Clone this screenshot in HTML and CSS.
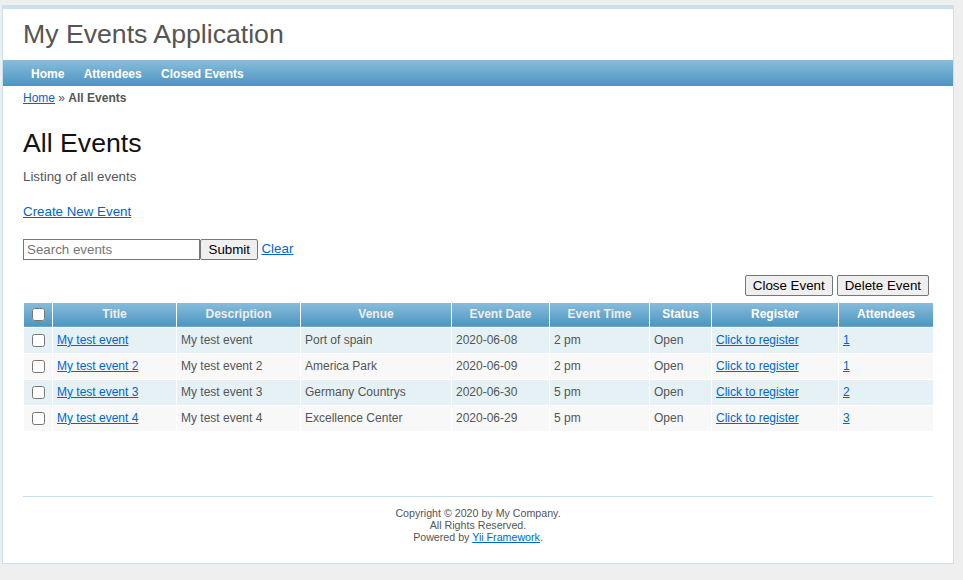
FILE: index.html
```html
<!DOCTYPE html>
<html lang="en">
<head>
<meta charset="utf-8">
<title>My Events Application - All Events</title>
<link rel="stylesheet" href="styles.css">
</head>
<body>
<div class="page">
  <div class="header">
    <div class="logo">My Events Application</div>
  </div>
  <div class="mainmenu">
    <ul>
      <li><a href="#">Home</a></li>
      <li><a href="#">Attendees</a></li>
      <li><a href="#">Closed Events</a></li>
    </ul>
  </div>
  <div class="breadcrumbs"><a href="#">Home</a> &raquo; <span>All Events</span></div>

  <div class="content">
    <h1>All Events</h1>
    <p>Listing of all events</p>
    <p><a href="#">Create New Event</a></p>

    <form class="search">
      <input type="text" class="search-input" placeholder="Search events">
      <button type="button" class="btn btn-submit">Submit</button>
      <a href="#" class="clear">Clear</a>
    </form>

    <div class="actions">
      <button type="button" class="btn">Close Event</button>
      <button type="button" class="btn">Delete Event</button>
    </div>

    <div class="grid-view">
      <table class="items">
        <colgroup>
          <col class="c-cb"><col class="c-title"><col class="c-desc"><col class="c-venue"><col class="c-date"><col class="c-time"><col class="c-status"><col class="c-reg"><col class="c-att">
        </colgroup>
        <thead>
          <tr>
            <th class="cb"><input type="checkbox"></th>
            <th><a href="#">Title</a></th>
            <th><a href="#">Description</a></th>
            <th><a href="#">Venue</a></th>
            <th><a href="#">Event Date</a></th>
            <th><a href="#">Event Time</a></th>
            <th>Status</th>
            <th>Register</th>
            <th>Attendees</th>
          </tr>
        </thead>
        <tbody>
          <tr class="odd">
            <td class="cb"><input type="checkbox"></td>
            <td><a href="#">My test event</a></td>
            <td>My test event</td>
            <td>Port of spain</td>
            <td>2020-06-08</td>
            <td>2 pm</td>
            <td>Open</td>
            <td><a href="#">Click to register</a></td>
            <td><a href="#">1</a></td>
          </tr>
          <tr class="even">
            <td class="cb"><input type="checkbox"></td>
            <td><a href="#">My test event 2</a></td>
            <td>My test event 2</td>
            <td>America Park</td>
            <td>2020-06-09</td>
            <td>2 pm</td>
            <td>Open</td>
            <td><a href="#">Click to register</a></td>
            <td><a href="#">1</a></td>
          </tr>
          <tr class="odd">
            <td class="cb"><input type="checkbox"></td>
            <td><a href="#">My test event 3</a></td>
            <td>My test event 3</td>
            <td>Germany Countrys</td>
            <td>2020-06-30</td>
            <td>5 pm</td>
            <td>Open</td>
            <td><a href="#">Click to register</a></td>
            <td><a href="#">2</a></td>
          </tr>
          <tr class="even">
            <td class="cb"><input type="checkbox"></td>
            <td><a href="#">My test event 4</a></td>
            <td>My test event 4</td>
            <td>Excellence Center</td>
            <td>2020-06-29</td>
            <td>5 pm</td>
            <td>Open</td>
            <td><a href="#">Click to register</a></td>
            <td><a href="#">3</a></td>
          </tr>
        </tbody>
      </table>
    </div>
  </div>

  <div class="footer">
    Copyright &copy; 2020 by My Company.<br>
    All Rights Reserved.<br>
    Powered by <a href="#">Yii Framework</a>.
  </div>
</div>
</body>
</html>
```

FILE: styles.css
```css
* { box-sizing: border-box; }

body {
  margin: 0;
  padding: 0;
  background: #efefef;
  color: #555;
  font: normal 13.333px/20px "Liberation Sans", Arial, Helvetica, sans-serif;
}

a { color: #0066cc; }

.page {
  width: 952px;
  margin: 5px 0 5px 2px;
  background: #fff;
  border: 1px solid #c9e0ed;
}

.header {
  border-top: 3px solid #c9e0ed;
}

.logo {
  padding: 10px 20px;
  font-size: 26.667px;
  line-height: 31px;
  color: #555;
}

.mainmenu {
  background: linear-gradient(to bottom, #88bddb 0%, #4c95c1 100%);
}

.mainmenu ul {
  margin: 0;
  padding: 7px 20px 4px 20px;
  list-style: none;
  font-size: 12px;
  line-height: 15px;
  height: 26px;
}

.mainmenu li { display: inline; }

.mainmenu a {
  color: #fff;
  font-size: 12px;
  font-weight: bold;
  text-decoration: none;
  padding: 5px 8px;
}

.breadcrumbs {
  padding: 5px 20px;
  font-size: 12px;
  line-height: 14px;
}

.breadcrumbs span { font-weight: bold; }

.content {
  padding: 20px 20px 20px 20px;
}

h1 {
  margin: 0 0 10px 0;
  font-size: 26.667px;
  line-height: 26.667px;
  font-weight: normal;
  color: #111;
}

p {
  margin: 0 0 15px 0;
}

.search {
  display: flex;
  align-items: center;
  margin: 17px 0 0 0;
  height: 21px;
}

.search-input {
  width: 177px;
  height: 21px;
  margin: 0;
  padding: 1px 3px;
  border: 1px solid #767676;
  border-radius: 0;
  font: 13.333px "Liberation Sans", Arial, sans-serif;
  color: #333;
}

.search-input::placeholder { color: #757575; }

.btn {
  height: 21px;
  margin: 0;
  padding: 0 7px;
  border: 1px solid #767676;
  border-radius: 2px;
  background: #efefef;
  color: #000;
  font: 13.333px "Liberation Sans", Arial, sans-serif;
}

.btn-submit { padding: 0 7.5px; }

.clear { margin-left: 3px; }

.actions {
  display: flex;
  justify-content: flex-end;
  gap: 4px;
  margin-top: 15px;
  padding-right: 4px;
}

.grid-view {
  margin-top: 6px;
  margin-bottom: 34px;
}

table.items {
  width: 100%;
  table-layout: fixed;
  border-collapse: collapse;
  border: 1px solid #d0e3ef;
  background: #fff;
}

.c-cb { width: 29px; }
.c-title { width: 124px; }
.c-desc { width: 124px; }
.c-venue { width: 151px; }
.c-date { width: 98px; }
.c-time { width: 100px; }
.c-status { width: 62px; }
.c-reg { width: 127px; }
.c-att { width: 95px; }

table.items th,
table.items td {
  font-size: 12px;
  line-height: 17px;
  border: 1px solid #fff;
  padding: 4px 4px;
  text-align: left;
  white-space: nowrap;
  overflow: hidden;
}

table.items th {
  padding: 3px 4px 4px 4px;
  background: linear-gradient(to bottom, #88bddb 0%, #4c95c1 100%);
  color: #fff;
  text-align: center;
  font-weight: bold;
}

table.items th a {
  color: #eee;
  text-decoration: none;
}

table.items .cb {
  text-align: center;
  padding-left: 0;
  padding-right: 0;
}

table.items input[type="checkbox"] {
  width: 13px;
  height: 13px;
  margin: 0;
  vertical-align: middle;
}

table.items tr.odd { background: #e5f1f4; }
table.items tr.even { background: #f8f8f8; }

.footer {
  margin: 10px 20px;
  padding: 10px;
  border-top: 1px solid #c9e0ed;
  text-align: center;
  font-size: 10.667px;
  line-height: 12px;
}
```
